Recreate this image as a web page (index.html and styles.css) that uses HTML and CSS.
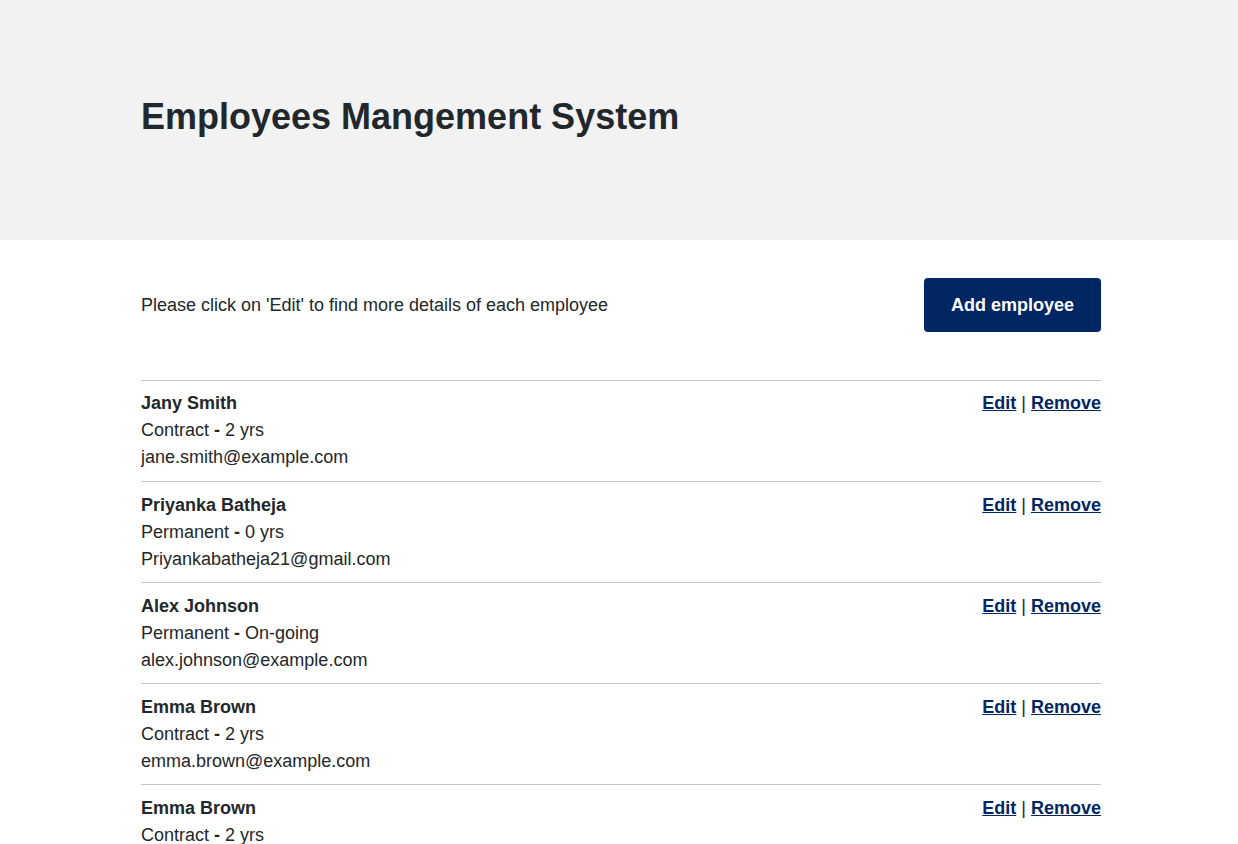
FILE: index.html
```html
<!DOCTYPE html>
<html lang="en">
<head>
<meta charset="utf-8">
<title>Employees Mangement System</title>
<link rel="stylesheet" href="styles.css">
</head>
<body>
<header class="hero">
  <div class="container">
    <h1 class="title">Employees Mangement System</h1>
  </div>
</header>
<main class="container main">
  <div class="toolbar">
    <p class="intro">Please click on 'Edit' to find more details of each employee</p>
    <button class="btn" type="button">Add employee</button>
  </div>
  <ul class="list">
    <li class="item">
      <div class="info">
        <div class="name">Jany Smith</div>
        <div>Contract <b>-</b> 2 yrs</div>
        <div>jane.smith@example.com</div>
      </div>
      <div class="actions"><a href="#">Edit</a> | <a href="#">Remove</a></div>
    </li>
    <li class="item">
      <div class="info">
        <div class="name">Priyanka Batheja</div>
        <div>Permanent <b>-</b> 0 yrs</div>
        <div>Priyankabatheja21@gmail.com</div>
      </div>
      <div class="actions"><a href="#">Edit</a> | <a href="#">Remove</a></div>
    </li>
    <li class="item">
      <div class="info">
        <div class="name">Alex Johnson</div>
        <div>Permanent <b>-</b> On-going</div>
        <div>alex.johnson@example.com</div>
      </div>
      <div class="actions"><a href="#">Edit</a> | <a href="#">Remove</a></div>
    </li>
    <li class="item">
      <div class="info">
        <div class="name">Emma Brown</div>
        <div>Contract <b>-</b> 2 yrs</div>
        <div>emma.brown@example.com</div>
      </div>
      <div class="actions"><a href="#">Edit</a> | <a href="#">Remove</a></div>
    </li>
    <li class="item">
      <div class="info">
        <div class="name">Emma Brown</div>
        <div>Contract <b>-</b> 2 yrs</div>
        <div>emma.brown@example.com</div>
      </div>
      <div class="actions"><a href="#">Edit</a> | <a href="#">Remove</a></div>
    </li>
  </ul>
</main>
</body>
</html>
```

FILE: styles.css
```css
* { box-sizing: border-box; }
html, body { margin: 0; padding: 0; }
body {
  font-family: "Liberation Sans", Arial, sans-serif;
  font-size: 18px;
  line-height: 27px;
  color: #22272b;
  background: #fff;
  padding-left: 4px;
}
.container {
  width: 960px;
  margin: 0 auto;
}
.hero {
  background: #f2f2f2;
  height: 240px;
  margin-left: -4px;
  padding-left: 4px;
  display: flex;
  align-items: center;
}
.title {
  margin: 0;
  font-size: 36px;
  line-height: 44px;
  font-weight: 700;
  color: #22272b;
  padding-bottom: 6px;
}
.main { padding-top: 38px; }
.toolbar {
  display: flex;
  justify-content: space-between;
  align-items: center;
  margin-bottom: 48px;
}
.intro { margin: 0; }
.btn {
  font-family: inherit;
  font-size: 18px;
  font-weight: 700;
  line-height: 27px;
  color: #fff;
  background: #002664;
  border: none;
  border-radius: 4px;
  width: 177px;
  height: 54px;
  padding: 0;
  cursor: pointer;
}
.list {
  list-style: none;
  margin: 0;
  padding: 0;
}
.item {
  display: flex;
  justify-content: space-between;
  align-items: flex-start;
  border-top: 1px solid #c6c6c6;
  padding: 10px 0 9px;
}
.item:first-child { padding: 9px 0 10px; }
.name { font-weight: 700; }
.actions { color: #22272b; }
.actions a {
  color: #002664;
  font-weight: 700;
  text-decoration: underline;
}
```
